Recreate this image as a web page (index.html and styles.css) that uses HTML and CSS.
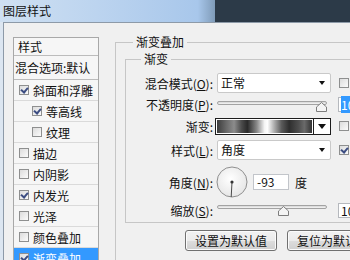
FILE: index.html
```html
<!DOCTYPE html>
<html lang="zh-CN">
<head>
  <meta charset="UTF-8">
  <title>图层样式</title>
  <link rel="stylesheet" href="styles.css">
</head>
<body>

  <div class="titlebar">
    <div class="title">图层样式</div>
    <div class="behind"></div>
  </div>

  <div class="frame">
    <div class="dialog">

      <ul class="styles">
        <li class="head">样式</li>
        <li class="blend">混合选项:默认</li>
        <li><span class="cb on"></span>斜面和浮雕</li>
        <li class="sub"><span class="cb on"></span>等高线</li>
        <li class="sub"><span class="cb"></span>纹理</li>
        <li><span class="cb"></span>描边</li>
        <li><span class="cb"></span>内阴影</li>
        <li><span class="cb on"></span>内发光</li>
        <li><span class="cb"></span>光泽</li>
        <li><span class="cb"></span>颜色叠加</li>
        <li class="active"><span class="cb on"></span>渐变叠加</li>
      </ul>

      <fieldset class="group outer">
        <legend>渐变叠加</legend>

        <fieldset class="group inner">
          <legend>渐变</legend>

          <div class="row r1">
            <label>混合模式(<u>O</u>):</label>
            <div class="select">正常<span class="arrow"></span></div>
            <span class="cb side"></span>
          </div>

          <div class="row r2">
            <label>不透明度(<u>P</u>):</label>
            <div class="slider">
              <div class="track"></div>
              <svg class="thumb" style="left: 99px" width="11" height="10" viewBox="0 0 11 10"><path d="M5.5 0.5 L10.5 5 L10.5 9.5 L0.5 9.5 L0.5 5 Z" fill="#f4f4f4" stroke="#7d7d7d"/></svg>
            </div>
            <div class="num"><span class="picked">100</span></div>
          </div>

          <div class="row r3">
            <label>渐变:</label>
            <div class="gradient">
              <div class="ramp"></div>
              <div class="drop"><span class="arrow"></span></div>
            </div>
            <span class="cb side"></span>
          </div>

          <div class="row r4">
            <label>样式(<u>L</u>):</label>
            <div class="select">角度<span class="arrow"></span></div>
            <span class="cb side on"></span>
          </div>

          <div class="row r5">
            <label>角度(<u>N</u>):</label>
            <svg class="dial" width="32" height="32" viewBox="0 0 32 32">
              <defs>
                <radialGradient id="dialFill" cx="0.45" cy="0.4" r="0.6">
                  <stop offset="0" stop-color="#ffffff"/>
                  <stop offset="1" stop-color="#e6e6e6"/>
                </radialGradient>
              </defs>
              <circle cx="16" cy="16" r="15" fill="url(#dialFill)" stroke="#8f8f8f"/>
              <line x1="16" y1="16" x2="15.2" y2="31" stroke="#4a4a4a" stroke-width="1"/>
              <circle cx="16" cy="16" r="1.6" fill="#333"/>
            </svg>
            <div class="angle">-93</div>
            <span class="unit">度</span>
          </div>

          <div class="row r6">
            <label>缩放(<u>S</u>):</label>
            <div class="slider">
              <div class="track"></div>
              <svg class="thumb" style="left: 61px" width="11" height="10" viewBox="0 0 11 10"><path d="M5.5 0.5 L10.5 5 L10.5 9.5 L0.5 9.5 L0.5 5 Z" fill="#f4f4f4" stroke="#7d7d7d"/></svg>
            </div>
            <div class="num">100</div>
          </div>
        </fieldset>

        <div class="buttons">
          <button>设置为默认值</button>
          <button>复位为默认值</button>
        </div>
      </fieldset>

    </div>
  </div>

</body>
</html>
```

FILE: styles.css
```css
body {
  margin: 0;
  width: 350px;
  height: 260px;
  overflow: hidden;
  font-family: "Noto Sans CJK SC", "Liberation Sans", sans-serif;
  font-size: 12px;
  color: #111;
  background: #f0f0f0;
}

/* title bar */

.titlebar {
  display: flex;
  height: 22px;
}

.title {
  width: 212px;
  padding-left: 3px;
  line-height: 22px;
  font-size: 12px;
  color: #111;
  background: linear-gradient(90deg, #cfe0f2 0%, #bcd4ef 45%, #a8c7eb 92%, #7f9bb8 100%);
}

.behind {
  flex: 1;
  background: #2c3a48;
}

/* dialog frame */

.frame {
  display: flex;
  height: 238px;
  padding-left: 3px;
  background: #dce6f1;
}

.dialog {
  flex: 1;
  display: flex;
  align-items: flex-start;
  padding-top: 11px;
  background: #f0f0f0;
  border-top: 1px solid #8d9aa8;
  border-left: 1px solid #8d9aa8;
  overflow: hidden;
}

/* style list */

.styles {
  flex-shrink: 0;
  box-sizing: border-box;
  width: 86px;
  margin: 3px 0 0 9px;
  padding: 0;
  list-style: none;
  border: 1px solid #a8a8a8;
  background: #f6f6f6;
}

.styles li {
  display: flex;
  align-items: center;
  height: 20px;
  padding-left: 5px;
  border-bottom: 1px solid #dadada;
  white-space: nowrap;
}

.styles li.head {
  height: 17px;
  padding-left: 4px;
  border-bottom-color: #bcbcbc;
}

.styles li.blend {
  height: 23px;
  padding-left: 1px;
  border-bottom-color: #bcbcbc;
}

.styles li.sub {
  padding-left: 18px;
}

.styles li.active {
  background: #3399ff;
  color: #fff;
}

.cb {
  position: relative;
  box-sizing: border-box;
  flex-shrink: 0;
  width: 10px;
  height: 10px;
  margin-right: 4px;
  border: 1px solid #8e8f8f;
  background: linear-gradient(135deg, #dcdcdc, #fbfbfb);
}

.cb.on::after {
  content: "";
  position: absolute;
  left: 2px;
  top: 0;
  width: 3px;
  height: 5px;
  border-right: 2px solid #3c4d82;
  border-bottom: 2px solid #3c4d82;
  transform: rotate(40deg);
}

/* group boxes */

.group {
  margin: 0;
  padding: 0;
  min-width: 0;
  border: 1px solid #c6c6c6;
}

.group legend {
  padding: 0 3px;
  line-height: 16px;
}

.outer {
  flex-shrink: 0;
  width: 300px;
  margin-left: 16px;
  padding-bottom: 40px;
}

.outer > legend {
  margin-left: 17px;
}

.inner {
  margin: 1px 0 0 9px;
  padding: 5px 0 4px 0;
}

.inner > legend {
  margin-left: 15px;
}

/* rows */

.row {
  display: flex;
  align-items: center;
  white-space: nowrap;
}

.row label {
  flex-shrink: 0;
  width: 87px;
  margin-right: 4px;
  text-align: right;
}

.r1 { height: 22px; }
.r2 { height: 20px; }
.r3 { height: 24px; }
.r4 { height: 24px; }
.r5 { height: 40px; }
.r6 { height: 16px; }

.cb.side {
  margin-left: 8px;
}

.select {
  position: relative;
  box-sizing: border-box;
  width: 114px;
  height: 20px;
  padding-left: 3px;
  line-height: 18px;
  border: 1px solid #c9c9c9;
  border-radius: 2px;
  background: #fff;
}

.arrow {
  position: absolute;
  right: 5px;
  top: 50%;
  margin-top: -2px;
  border-left: 3.5px solid transparent;
  border-right: 3.5px solid transparent;
  border-top: 4px solid #111;
}

.slider {
  position: relative;
  flex-shrink: 0;
  width: 110px;
  height: 14px;
}

.r6 .slider {
  margin-top: -4px;
}

.track {
  box-sizing: border-box;
  margin-top: 4px;
  height: 4px;
  border: 1px solid #a3a3a3;
  border-radius: 2px;
  background: linear-gradient(#d6d6d6, #f6f6f6);
}

.thumb {
  position: absolute;
  top: 5px;
}

.num {
  box-sizing: border-box;
  width: 30px;
  height: 15px;
  margin-left: 11px;
  padding-left: 2px;
  line-height: 13px;
  border: 1px solid #b5b8bd;
  background: #fff;
}

.picked {
  background: #3399ff;
  color: #fff;
}

.gradient {
  display: flex;
  box-sizing: border-box;
  width: 116px;
  height: 17px;
  margin-left: -2px;
  border: 1px solid #1c1c1c;
  background: #fff;
}

.ramp {
  flex: 1;
  margin: 1px;
  background: linear-gradient(90deg, #3c3c3c 0%, #6a6a6a 10%, #8c8c8c 18%, #4a4a4a 26%, #2a2a2a 32%, #8a8a8a 42%, #f4f4f4 50%, #ffffff 53%, #b0b0b0 60%, #5a5a5a 68%, #2e2e2e 76%, #4e4e4e 86%, #6a6a6a 92%, #333 100%);
}

.drop {
  position: relative;
  width: 16px;
  border-left: 1px solid #1c1c1c;
  background: #fff;
}

.drop .arrow {
  right: 4px;
  border-left-width: 4px;
  border-right-width: 4px;
  border-top-width: 5px;
}

.gradient + .cb.side {
  margin-left: 8px;
}

.dial {
  margin-left: -1px;
}

.angle {
  box-sizing: border-box;
  width: 36px;
  height: 16px;
  margin-left: 5px;
  padding-left: 3px;
  line-height: 14px;
  border: 1px solid #c2c5ca;
  background: #fff;
}

.unit {
  margin-left: 6px;
}

/* buttons */

.buttons {
  display: flex;
  gap: 10px;
  margin-top: 7px;
  padding-left: 69px;
}

button {
  flex-shrink: 0;
  width: 92px;
  height: 21px;
  padding: 0;
  font-family: inherit;
  font-size: 12px;
  color: #111;
  border: 1px solid #707070;
  border-radius: 3px;
  background: linear-gradient(#f2f2f2 0%, #ebebeb 50%, #dddddd 51%, #cfcfcf 100%);
  box-shadow: inset 0 0 0 1px #fbfbfb;
}
```
